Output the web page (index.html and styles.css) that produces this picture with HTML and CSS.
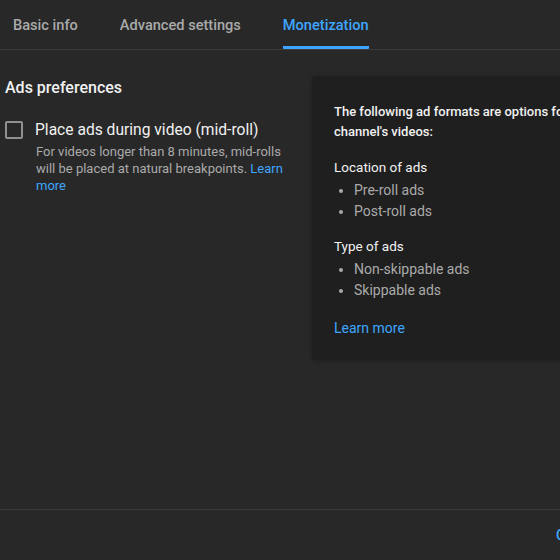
FILE: index.html
```html
<!DOCTYPE html>
<html lang="en">
<head>
<meta charset="utf-8">
<title>Monetization</title>
<link rel="stylesheet" href="styles.css">
</head>
<body>
<div class="page">
  <nav class="tabs">
    <span class="tab">Basic info</span>
    <span class="tab">Advanced settings</span>
    <span class="tab active">Monetization</span>
  </nav>
  <main class="main">
    <section class="left">
      <h2 class="heading">Ads preferences</h2>
      <div class="option">
        <span class="checkbox"></span>
        <div class="option-text">
          <div class="label">Place ads during video (mid-roll)</div>
          <p class="desc">For videos longer than 8 minutes, mid-rolls will be placed at natural breakpoints. <a class="link">Learn more</a></p>
        </div>
      </div>
    </section>
    <aside class="panel">
      <p class="intro">The following ad formats are options for your<br>channel's videos:</p>
      <div class="group-title">Location of ads</div>
      <ul class="list">
        <li>Pre-roll ads</li>
        <li>Post-roll ads</li>
      </ul>
      <div class="group-title type">Type of ads</div>
      <ul class="list">
        <li>Non-skippable ads</li>
        <li>Skippable ads</li>
      </ul>
      <a class="link panel-link">Learn more</a>
    </aside>
  </main>
  <footer class="footer">
    <span class="footer-btn">CLOSE</span>
  </footer>
</div>
</body>
</html>
```

FILE: styles.css
```css
html, body {
  margin: 0;
  padding: 0;
  background: #282828;
}
body {
  width: 560px;
  height: 560px;
  overflow: hidden;
  font-family: Roboto, "Noto Sans", Arial, sans-serif;
  color: #f1f1f1;
}
.page {
  display: flex;
  flex-direction: column;
  height: 560px;
}
.tabs {
  display: flex;
  gap: 42px;
  padding-left: 13px;
  height: 49px;
  border-bottom: 1px solid #3b3b3b;
  flex-shrink: 0;
}
.tab {
  display: flex;
  align-items: center;
  height: 42px;
  padding-top: 4px;
  font-size: 14.6px;
  font-weight: 500;
  color: #aaaaaa;
  border-bottom: 3px solid transparent;
  box-sizing: content-box;
}
.tab.active {
  color: #3ea6ff;
  border-bottom-color: #3ea6ff;
  border-radius: 0 0 1px 1px;
}
.main {
  flex: 1;
  display: flex;
  min-height: 0;
}
.left {
  width: 307px;
  padding-left: 5px;
  padding-top: 28px;
  flex-shrink: 0;
}
.heading {
  margin: 0;
  font-size: 16px;
  font-weight: 500;
  line-height: 20px;
  color: #f1f1f1;
}
.option {
  display: flex;
  gap: 12px;
  margin-top: 22px;
}
.checkbox {
  width: 14px;
  height: 14px;
  border: 2px solid #909090;
  border-radius: 2px;
  margin-top: 1px;
  flex-shrink: 0;
}
.label {
  font-size: 15.6px;
  line-height: 20px;
  color: #f1f1f1;
}
.desc {
  margin: 3px 0 0 1px;
  width: 250px;
  font-size: 13px;
  line-height: 17px;
  color: #aaaaaa;
}
.link {
  color: #3ea6ff;
  text-decoration: none;
}
.panel {
  margin-top: 26px;
  align-self: flex-start;
  width: 320px;
  flex-shrink: 0;
  background: #1f1f1f;
  border-radius: 4px;
  box-shadow: 0 1px 4px rgba(0, 0, 0, 0.25);
  padding: 26px 22px 22px;
  font-size: 13px;
  white-space: nowrap;
}
.intro {
  margin: 0;
  font-weight: 500;
  line-height: 20px;
  color: #f1f1f1;
}
.group-title {
  margin-top: 15px;
  line-height: 20px;
  font-size: 13.5px;
  color: #f1f1f1;
}
.group-title.type {
  margin-top: 14px;
}
.list {
  margin: 3px 0 0;
  padding-left: 20px;
  color: #aaaaaa;
  font-size: 14px;
  line-height: 21px;
}
.list li::marker {
  font-size: 13px;
}
.panel-link {
  display: block;
  margin-top: 17px;
  line-height: 20px;
  font-size: 14px;
}
.footer {
  height: 50px;
  border-top: 1px solid #383838;
  flex-shrink: 0;
  display: flex;
  align-items: center;
}
.footer-btn {
  margin-left: 556px;
  font-size: 14px;
  font-weight: 500;
  color: #3ea6ff;
}
```
